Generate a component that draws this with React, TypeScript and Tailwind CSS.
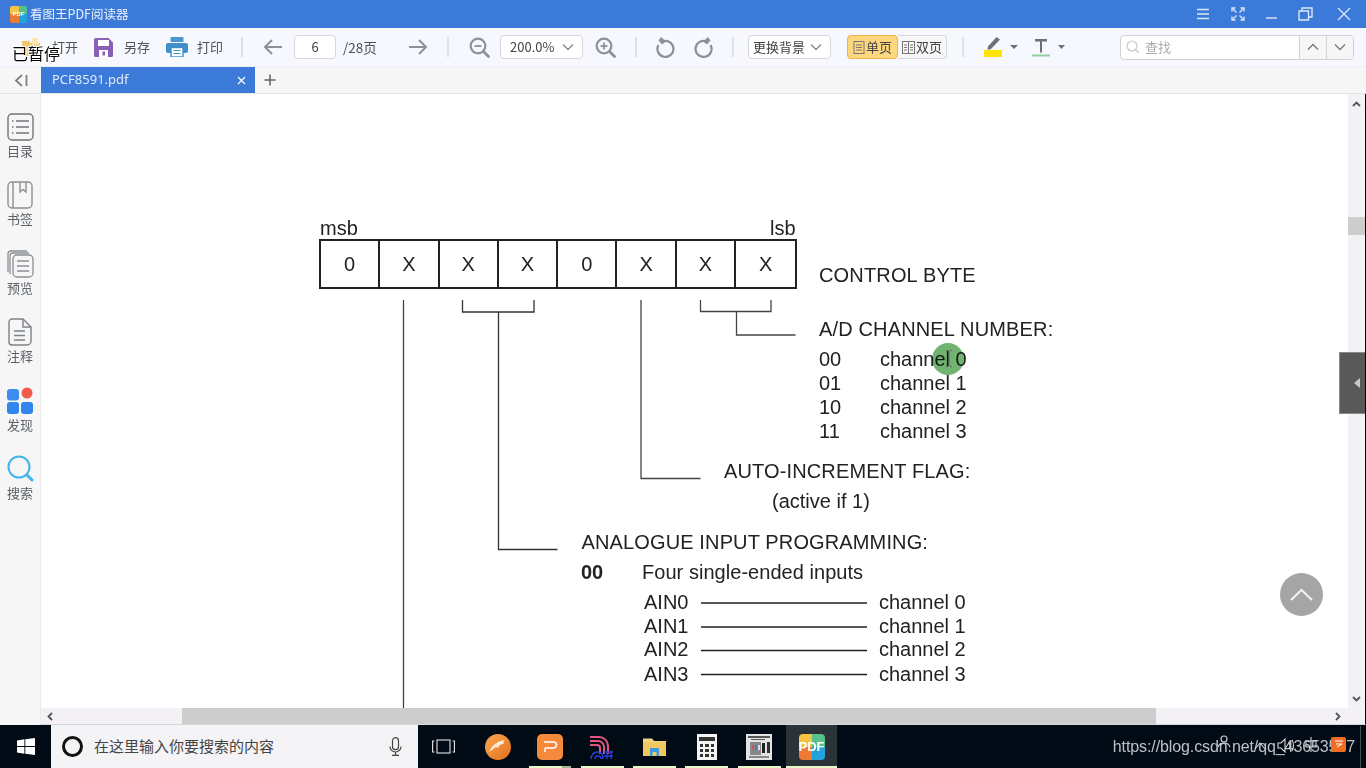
import React from "react";

const CJK = "font-['Noto_Sans_CJK_SC','Noto_Sans',sans-serif]";

function T({ c, children }: { c: string; children: React.ReactNode }) {
  return <div className={`absolute whitespace-nowrap text-[20px] leading-[24px] text-[#222] ${c}`}>{children}</div>;
}

function PdfLogo({ box, text }: { box: string; text: string }) {
  return (
    <div className={`relative shrink-0 overflow-hidden grid grid-cols-2 grid-rows-2 ${box}`}>
      <div className="bg-[#f6c343]" />
      <div className="bg-[#58c08a]" />
      <div className="bg-[#ee7a35]" />
      <div className="bg-[#22a3dc]" />
      <div className={`absolute inset-0 flex items-center justify-center font-bold text-white font-['Liberation_Sans',sans-serif] ${text}`}>PDF</div>
    </div>
  );
}

function Sep({ ml }: { ml: string }) {
  return <div className={`w-[2px] h-[20px] bg-[#dfe1e6] shrink-0 ${ml}`} />;
}

function Chevron({ up = false, c = "#888" }: { up?: boolean; c?: string }) {
  return (
    <svg width="12" height="8" viewBox="0 0 12 8" fill="none">
      <path d={up ? "M1 6.5 6 1.5 11 6.5" : "M1 1.5 6 6.5 11 1.5"} stroke={c} strokeWidth="1.3" />
    </svg>
  );
}

function Zoom({ plus }: { plus?: boolean }) {
  return (
    <svg width="21" height="21" viewBox="0 0 21 21" fill="none" stroke="#8a9299">
      <circle cx="9" cy="9" r="7.3" strokeWidth="2.2" />
      <path d="M14.5 14.5 19.5 19.5" strokeWidth="2.8" strokeLinecap="round" />
      <path d="M5.5 9h7" strokeWidth="1.8" />
      {plus && <path d="M9 5.5v7" strokeWidth="1.8" />}
    </svg>
  );
}

function Rotate({ flip }: { flip?: boolean }) {
  return (
    <svg width="20" height="22" viewBox="0 0 20 22" fill="none" stroke="#8a9299" strokeWidth="2.2" className={flip ? "-scale-x-100" : ""}>
      <path d="M6.5 5.5A8 8 0 1 1 2.5 9" />
      <path d="M6 0.8 10.5 4.8 7 7.5 4 4Z" fill="#8a9299" strokeWidth="0.8" transform="translate(-1 0.6)" />
    </svg>
  );
}

function SideItem({ label, children }: { label: string; children: React.ReactNode }) {
  return (
    <div className="h-[68.4px] flex flex-col items-center shrink-0">
      <div className="h-[33px] pt-[2px] w-full flex items-start justify-center">{children}</div>
      <div className={`text-[13px] leading-[14px] text-[#5c6168] ${CJK}`}>{label}</div>
    </div>
  );
}

const cells = ["0", "X", "X", "X", "0", "X", "X", "X"];

export default function App() {
  return (
    <div className={`relative w-[1366px] h-[768px] overflow-hidden flex flex-col bg-white ${CJK}`}>
      {/* Title bar */}
      <div className="h-[28px] shrink-0 bg-[#3b7ad9] flex items-center text-white">
        <PdfLogo box="ml-[10px] w-[17px] h-[17px] rounded-[2px]" text="text-[6px]" />
        <div className="ml-[3px] text-[12.5px] leading-[16px] text-[#e9f0fb]">看图王PDF阅读器</div>
        <div className="flex-1" />
        <svg width="160" height="20" viewBox="0 0 160 20" fill="none" stroke="#dbe7f8" className="mr-[14px]">
          <path d="M5 5.500h12M5 10h12M5 14.500h12" strokeWidth="1.4" />
          <path d="M41 5l3.500 3.500M51 5l-3.500 3.500M41 15l3.500-3.500M51 15l-3.500-3.500" strokeWidth="1.4" />
          <path d="M40 7.500V4h3.500M48.500 4H52v3.500M40 12.500V16h3.500M48.500 16H52v-3.500" strokeWidth="1.4" />
          <path d="M74 14h11" strokeWidth="1.4" />
          <path d="M107 7h9.500v9H107zM110 7V4h10v9h-3.500" strokeWidth="1.4" />
          <path d="M146 4l12 12M158 4l-12 12" strokeWidth="1.4" />
        </svg>
      </div>

      {/* Toolbar */}
      <div className="h-[39px] shrink-0 bg-[#f7f8fd] border-b border-[#eceef3] flex items-center text-[13px] text-[#4d5358]">
        <svg width="20" height="19" viewBox="0 0 20 19" className="ml-[21px] shrink-0">
          <path d="M1 3h7l2 2h9v13H1Z" fill="#f3c873" />
          <path d="M11 0h6v7h-6z" fill="#fbe6b0" />
        </svg>
        <div className="ml-[11px] w-[26px] shrink-0">打开</div>
        <svg width="19" height="19" viewBox="0 0 19 19" className="ml-[16px] shrink-0">
          <path d="M1.5 0h13L19 4.500v13a1.500 1.500 0 0 1-1.500 1.500h-16A1.500 1.500 0 0 1 0 17.500v-16A1.500 1.500 0 0 1 1.500 0Z" fill="#8a5fb4" />
          <rect x="4" y="2" width="11" height="6" fill="#fff" />
          <rect x="5" y="12" width="9" height="7" fill="#fff" />
          <rect x="8.500" y="13.500" width="2.500" height="4" fill="#8a5fb4" />
        </svg>
        <div className="ml-[11px] w-[27px] shrink-0">另存</div>
        <svg width="22" height="20" viewBox="0 0 22 20" className="ml-[15px] shrink-0">
          <rect x="4.500" y="0" width="13" height="5" fill="#4a96cf" rx="1" />
          <rect x="0" y="6" width="22" height="10" rx="2" fill="#3f8fca" />
          <rect x="5" y="10.500" width="12" height="9.500" fill="#fff" stroke="#3f8fca" strokeWidth="1.4" />
          <path d="M7.500 13.500h7M7.500 16.500h7" stroke="#3f8fca" />
        </svg>
        <div className="ml-[9px] w-[26px] shrink-0">打印</div>
        <Sep ml="ml-[18px]" />
        <svg width="20" height="18" viewBox="0 0 20 18" fill="none" stroke="#8a9299" strokeWidth="2" className="ml-[20px] shrink-0">
          <path d="M19 9H2M9 2 2 9l7 7" />
        </svg>
        <div className="ml-[11px] w-[42px] h-[24px] shrink-0 bg-white border border-[#d5d8de] rounded-[4px] flex items-center justify-center text-[#444]">6</div>
        <div className="ml-[7px] w-[34px] shrink-0 text-[13.5px] whitespace-nowrap">/28页</div>
        <svg width="20" height="18" viewBox="0 0 20 18" fill="none" stroke="#8a9299" strokeWidth="2" className="ml-[31px] shrink-0">
          <path d="M1 9h17M11 2l7 7-7 7" />
        </svg>
        <Sep ml="ml-[19px]" />
        <div className="ml-[20px] shrink-0 flex"><Zoom /></div>
        <div className="ml-[10px] w-[83px] h-[24px] shrink-0 bg-white border border-[#d5d8de] rounded-[4px] flex items-center justify-between pl-[9px] pr-[8px] text-[#444]">
          <span>200.0%</span>
          <Chevron />
        </div>
        <div className="ml-[12px] shrink-0 flex"><Zoom plus /></div>
        <Sep ml="ml-[19px]" />
        <div className="ml-[19px] shrink-0 flex"><Rotate /></div>
        <div className="ml-[17px] shrink-0 flex"><Rotate flip /></div>
        <Sep ml="ml-[19px]" />
        <div className="ml-[14px] w-[83px] h-[24px] shrink-0 bg-white border border-[#d5d8de] rounded-[4px] flex items-center justify-between pl-[4px] pr-[8px] text-[#444]">
          <span>更换背景</span>
          <Chevron />
        </div>
        <div className="ml-[16px] w-[51px] h-[24px] shrink-0 bg-[#fdd77d] border border-[#eeb24e] rounded-[4px] flex items-center justify-center gap-[1px] text-[#444]">
          <svg width="12" height="13" viewBox="0 0 12 13" fill="none" stroke="#777"><rect x="1" y="0.500" width="10" height="12" /><path d="M3 4h6M3 6.500h6M3 9h6" /></svg>
          <span>单页</span>
        </div>
        <div className="w-[49px] h-[24px] shrink-0 bg-[#f7f7f7] border border-l-0 border-[#d5d8de] rounded-r-[4px] flex items-center justify-center gap-[1px] text-[#444]">
          <svg width="13" height="13" viewBox="0 0 13 13" fill="none" stroke="#777"><rect x="0.500" y="0.500" width="12" height="12" /><path d="M6.500 0.500v12M2 4h3M2 6.500h3M2 9h3M8 4h3M8 6.500h3M8 9h3" /></svg>
          <span>双页</span>
        </div>
        <Sep ml="ml-[15px]" />
        <svg width="18" height="20" viewBox="0 0 18 20" className="ml-[20px] shrink-0">
          <path d="M12.500 0 16 2.500 7 12 3.500 13 4 9.500Z" fill="#6b7177" />
          <rect x="0" y="13" width="18" height="7" fill="#ffe400" />
        </svg>
        <svg width="8" height="4" viewBox="0 0 8 4" className="ml-[8px] shrink-0"><path d="M0 0h8L4 4Z" fill="#6b7177" /></svg>
        <svg width="18" height="19" viewBox="0 0 18 19" className="ml-[14px] shrink-0">
          <path d="M3 1h12v2.500H10v11H8v-11H3Z" fill="#6b7177" />
          <rect x="0" y="16.500" width="18" height="2" fill="#8fd19e" />
        </svg>
        <svg width="7" height="4" viewBox="0 0 7 4" className="ml-[8px] shrink-0"><path d="M0 0h7L3.500 4Z" fill="#6b7177" /></svg>
        <div className="ml-[55px] w-[234px] h-[25px] shrink-0 bg-white border border-[#d0d2d6] rounded-[4px] flex items-center overflow-hidden">
          <svg width="14" height="14" viewBox="0 0 14 14" fill="none" stroke="#c4c7cb" className="ml-[5px] shrink-0">
            <circle cx="6" cy="6" r="5" strokeWidth="1.2" /><path d="M9.500 9.500 13 13" strokeWidth="1.3" />
          </svg>
          <span className="ml-[5px] flex-1 text-[#a9adb2]">查找</span>
          <div className="w-[27px] h-full bg-[#f6f6f6] border-l border-[#d0d2d6] flex items-center justify-center"><Chevron up c="#777" /></div>
          <div className="w-[27px] h-full bg-[#f6f6f6] border-l border-[#d0d2d6] flex items-center justify-center"><Chevron c="#777" /></div>
        </div>
      </div>

      {/* Tabs */}
      <div className="h-[27px] shrink-0 bg-[#f6f6f6] border-b border-[#e2e2e2] flex items-stretch">
        <div className="w-[41px] shrink-0 flex items-center justify-center">
          <svg width="14" height="13" viewBox="0 0 14 13" fill="none" stroke="#7c8287" strokeWidth="1.8">
            <path d="M8 1 2 6.500 8 12M12.500 1v11" />
          </svg>
        </div>
        <div className="w-[214px] shrink-0 bg-[#3b7ad9] flex items-center justify-between pl-[11px] pr-[9px] text-[13px] text-[#dfe9f9] font-['Noto_Sans',sans-serif]">
          <span>PCF8591.pdf</span>
          <svg width="9" height="9" viewBox="0 0 9 9" stroke="#fff" strokeWidth="1.2"><path d="M1 1l7 7M8 1 1 8" /></svg>
        </div>
        <div className="ml-[9px] flex items-center">
          <svg width="12" height="12" viewBox="0 0 12 12" stroke="#666" strokeWidth="1.6"><path d="M6 0.500v11M0.500 6h11" /></svg>
        </div>
      </div>

      {/* Body */}
      <div className="flex-1 min-h-0 flex">
        <div className="w-[41px] shrink-0 bg-[#f6f6f6] border-r border-[#ececec] pt-[17px] flex flex-col">
          <SideItem label="目录">
            <svg width="27" height="28" viewBox="0 0 27 28" fill="none" stroke="#70767c" strokeWidth="1.4">
              <rect x="1" y="1" width="25" height="26" rx="4" />
              <path d="M9 8h13M9 14h13M9 20h13M5 8h1.500M5 14h1.500M5 20h1.500" strokeWidth="1.6" />
            </svg>
          </SideItem>
          <SideItem label="书签">
            <svg width="26" height="28" viewBox="0 0 26 28" fill="none" stroke="#8a9095" strokeWidth="1.4">
              <rect x="1" y="1" width="24" height="26" rx="4" />
              <path d="M6 1v26M13 1v10l3-2.500 3 2.500V1" />
            </svg>
          </SideItem>
          <SideItem label="预览">
            <svg width="27" height="28" viewBox="0 0 27 28" fill="none" stroke="#8a9095" strokeWidth="1.3">
              <path d="M1 22V4a3 3 0 0 1 3-3h16" />
              <path d="M3 24V6a3 3 0 0 1 3-3h16" />
              <rect x="6" y="5" width="20" height="22" rx="4" />
              <path d="M10 11h12M10 16h12M10 21h12" strokeWidth="1.6" />
            </svg>
          </SideItem>
          <SideItem label="注释">
            <svg width="24" height="28" viewBox="0 0 24 28" fill="none" stroke="#7c8288" strokeWidth="1.4">
              <path d="M4 1h11l8 8v14a4 4 0 0 1-4 4H4a3 3 0 0 1-3-3V4a3 3 0 0 1 3-3Z" />
              <path d="M15 1v8h8M6 13h11M6 17.500h11M6 22h11" />
            </svg>
          </SideItem>
          <SideItem label="发现">
            <svg width="26" height="27" viewBox="0 0 26 27">
              <rect x="0" y="2" width="12" height="11.500" rx="3" fill="#3d8cf0" />
              <circle cx="20" cy="6" r="5.500" fill="#f25a4a" />
              <rect x="0" y="15" width="12" height="12" rx="3" fill="#2e86ee" />
              <rect x="14" y="15" width="12" height="12" rx="3" fill="#2e86ee" />
            </svg>
          </SideItem>
          <SideItem label="搜索">
            <svg width="27" height="27" viewBox="0 0 27 27" fill="none" stroke="#43b4ea">
              <circle cx="12" cy="12" r="10.500" strokeWidth="2" />
              <path d="M20 20l5 5" strokeWidth="3" strokeLinecap="round" />
            </svg>
          </SideItem>
        </div>

        <div className="flex-1 min-w-0 flex flex-col">
          <div className="flex-1 min-h-0 flex">
            {/* PDF canvas */}
            <div className="relative flex-1 bg-white overflow-hidden font-['Liberation_Sans',Arial,sans-serif]">
              <svg className="absolute left-0 top-0" width="1307" height="615" viewBox="41 94 1307 615" fill="none" stroke="#444" strokeWidth="1.3">
                <path d="M403.500 300V708" />
                <path d="M462.500 300V312H534V300M498.500 312V549.500H557.500" stroke="#333" />
                <path d="M641 300V478.500H700.500" />
                <path d="M700.500 300V311.500H771V300M736.500 311.500V335H795.500" />
                <path d="M701 603H867M701 627H867M701 650.500H867M701 674.500H867" stroke="#222" />
              </svg>

              <T c="left-[279px] top-[122px]">msb</T>
              <T c="left-[729px] top-[122px]">lsb</T>
              <div className="absolute left-[278px] top-[145px] w-[478.300px] h-[50px] border-2 border-[#222] grid grid-cols-8 text-[20px] text-[#222]">
                {cells.map((v, i) => (
                  <div key={i} className={`flex items-center justify-center ${i < 7 ? "border-r-2 border-[#222]" : ""}`}>{v}</div>
                ))}
              </div>
              <T c="left-[778px] top-[169px] tracking-[0.16px]">CONTROL BYTE</T>
              <T c="left-[778px] top-[223px] tracking-[0.15px]">A/D CHANNEL NUMBER:</T>
              <T c="left-[778px] top-[253px]">00</T>
              <T c="left-[839px] top-[253px]">channel 0</T>
              <T c="left-[778px] top-[277px]">01</T>
              <T c="left-[839px] top-[277px]">channel 1</T>
              <T c="left-[778px] top-[301px]">10</T>
              <T c="left-[839px] top-[301px]">channel 2</T>
              <T c="left-[778px] top-[325px]">11</T>
              <T c="left-[839px] top-[325px]">channel 3</T>
              <T c="left-[683px] top-[365px] tracking-[0.13px]">AUTO-INCREMENT FLAG:</T>
              <T c="left-[731px] top-[395px]">(active if 1)</T>
              <T c="left-[540.500px] top-[436px] tracking-[0.13px]">ANALOGUE INPUT PROGRAMMING:</T>
              <T c="left-[540px] top-[466px] font-bold">00</T>
              <T c="left-[601px] top-[466px] tracking-[0.04px]">Four single-ended inputs</T>
              <T c="left-[603px] top-[496px]">AIN0</T>
              <T c="left-[838px] top-[496px]">channel 0</T>
              <T c="left-[603px] top-[520px]">AIN1</T>
              <T c="left-[838px] top-[520px]">channel 1</T>
              <T c="left-[603px] top-[543px]">AIN2</T>
              <T c="left-[838px] top-[543px]">channel 2</T>
              <T c="left-[603px] top-[568px]">AIN3</T>
              <T c="left-[838px] top-[568px]">channel 3</T>

              {/* click highlight and cursor */}
              <div className="absolute left-[891px] top-[249px] w-[32px] h-[32px] rounded-full bg-[#72b372] mix-blend-multiply" />
              <svg className="absolute left-[904px] top-[256px]" width="8" height="17" viewBox="0 0 8 17" fill="none" stroke="#666" strokeWidth="1">
                <path d="M1 0.500h2l1 1 1-1h2M4 1.500v14M1 16.500h2l1-1 1 1h2" />
              </svg>

              {/* scroll-to-top button */}
              <div className="absolute left-[1239px] top-[479px] w-[43px] h-[43px] rounded-full bg-[#a5a5a5] flex items-center justify-center">
                <svg width="23" height="13" viewBox="0 0 23 13" fill="none" stroke="#f2f2f2" strokeWidth="2"><path d="M1 12 11.500 2 22 12" /></svg>
              </div>

              {/* side drawer handle */}
              <div className="absolute right-0 top-[258px] w-[9px] h-[62px] bg-[#595959] border-l border-t border-b border-[#8a8a8a]" />
            </div>

            {/* Vertical scrollbar */}
            <div className="relative w-[18px] shrink-0 bg-[#f3f1f5] border-r border-r-black flex flex-col items-center">
              <svg width="9" height="6" viewBox="0 0 9 6" fill="none" stroke="#555" strokeWidth="1.8" className="mt-[7px] shrink-0"><path d="M1 5 4.500 1.500 8 5" /></svg>
              <div className="w-full h-[18px] bg-[#cdcdcd] mt-[110px] shrink-0" />
              <div className="flex-1" />
              <svg width="9" height="6" viewBox="0 0 9 6" fill="none" stroke="#555" strokeWidth="1.8" className="mb-[6px] shrink-0"><path d="M1 1 4.500 4.500 8 1" /></svg>
              <div className="absolute left-0 top-[258px] w-[17px] h-[62px] bg-[#595959] border-t border-b border-[#8a8a8a] flex items-center justify-center">
                <svg width="6" height="10" viewBox="0 0 6 10"><path d="M6 0v10L0 5Z" fill="#c8c8c8" /></svg>
              </div>
            </div>
          </div>

          {/* Horizontal scrollbar */}
          <div className="h-[17px] shrink-0 bg-[#f3f1f5] border-b border-[#d8d8d8] border-r border-r-black flex items-center">
            <svg width="6" height="9" viewBox="0 0 6 9" fill="none" stroke="#555" strokeWidth="1.8" className="ml-[6px] shrink-0"><path d="M5 1 1.500 4.500 5 8" /></svg>
            <div className="ml-[129px] w-[974px] h-full bg-[#cdcdcd] shrink-0" />
            <div className="flex-1" />
            <svg width="6" height="9" viewBox="0 0 6 9" fill="none" stroke="#555" strokeWidth="1.8" className="mr-[24px] shrink-0"><path d="M1 1 4.500 4.500 1 8" /></svg>
          </div>
        </div>
      </div>

      {/* Taskbar */}
      <div className="relative h-[43px] shrink-0 bg-[#010b16] flex items-center">
        <svg width="18" height="17" viewBox="0 0 18 17" className="ml-[17px] shrink-0" fill="#fff">
          <path d="M0 2.400 7.400 1.300V8H0ZM8.300 1.200 18 0V8H8.300ZM0 9h7.400v6.700L0 14.600ZM8.300 9H18v8l-9.700-1.300Z" />
        </svg>
        <div className="ml-[16px] w-[367px] h-full shrink-0 bg-[#f4f3f6] flex items-center">
          <div className="ml-[11px] w-[21px] h-[21px] rounded-full border-[3px] border-[#111] shrink-0" />
          <div className="ml-[11px] flex-1 text-[15px] text-[#444]">在这里输入你要搜索的内容</div>
          <svg width="13" height="19" viewBox="0 0 13 19" fill="none" stroke="#444" strokeWidth="1.2" className="mr-[16px] shrink-0">
            <rect x="3.500" y="0.700" width="6" height="12" rx="3" />
            <path d="M1 9.500a5.500 5.500 0 0 0 11 0M6.500 15v3M3 18.300h7" />
          </svg>
        </div>
        <svg width="23" height="15" viewBox="0 0 23 15" fill="none" stroke="#e8e8e8" strokeWidth="1.1" className="ml-[14px] shrink-0">
          <rect x="5" y="1" width="13" height="13" />
          <path d="M2.500 2H0.600v11h1.900M20.500 2h1.900v11h-1.900" />
        </svg>
        <div className="ml-[30px] w-[26px] h-[26px] rounded-full bg-gradient-to-br from-[#f8a951] to-[#e46d12] shrink-0 flex items-center justify-center">
          <svg width="20" height="18" viewBox="0 0 20 18" fill="#fbe8d4"><path d="M1 14C4 7 9 3 17 2c-2 2-2 3-1 4-4 0-5 2-6 4l-2-1c-2 1-4 3-7 5Z" /></svg>
        </div>
        <div className="ml-[26px] w-[26px] h-[26px] rounded-[5px] bg-[#f58a3c] shrink-0 flex items-center justify-center">
          <svg width="15" height="12" viewBox="0 0 15 12" fill="none" stroke="#fff" strokeWidth="1.500"><path d="M1 1h9.500a3 3 0 0 1 0 6H2M2 7v4" /></svg>
        </div>
        <svg width="23" height="26" viewBox="0 0 23 26" fill="none" className="ml-[27px] shrink-0">
          <path d="M0 3h9a9 9 0 0 1 9 9v8M0 7h8a6 6 0 0 1 6 6v7M0 11h7a3 3 0 0 1 3 3v6" stroke="#e2557f" strokeWidth="2" />
          <path d="M1 25c0-5 4-7 7-7s5 2 5 7M5 25c0-2 1-3 3-3s3 1 3 3M14 18h9M14 22h9M17 17v8M21 17v8" stroke="#2a3fd8" strokeWidth="1.3" />
        </svg>
        <svg width="23" height="20" viewBox="0 0 23 20" className="ml-[30px] shrink-0">
          <path d="M0 1.500h9l2 2.500h12v15H0Z" fill="#f3d67b" />
          <rect x="0" y="5" width="23" height="14" fill="#f1c763" />
          <path d="M7 11h9v8h-2.500v-4h-4v4H7Z" fill="#3c9bd8" />
        </svg>
        <div className="ml-[31px] w-[20px] h-[26px] bg-[#f4f4f4] shrink-0 flex flex-col items-center pt-[3px]">
          <div className="w-[16px] h-[4px] bg-[#333]" />
          <div className="mt-[3px] w-[14px] grid grid-cols-3 gap-x-[2px] gap-y-[2px]">
            {[0, 1, 2, 3, 4, 5, 6, 7, 8].map((k) => <div key={k} className="h-[3px] bg-[#333]" />)}
          </div>
        </div>
        <svg width="26" height="26" viewBox="0 0 26 26" className="ml-[29px] shrink-0">
          <rect width="26" height="26" fill="#e3e3e3" />
          <path d="M2 2h22v2H2zM5 5h14v1H5z" fill="#555" />
          <rect x="4" y="8" width="11" height="13" fill="#86888b" />
          <rect x="16" y="9" width="3" height="10" fill="#222" />
          <rect x="21" y="8" width="3" height="11" fill="#333" />
          <rect x="6" y="11" width="2" height="5" fill="#c55" />
          <rect x="9" y="11" width="2" height="5" fill="#57a" />
          <rect x="12" y="11" width="2" height="5" fill="#ddd" />
          <rect x="3" y="22" width="20" height="2" fill="#888" />
        </svg>
        <div className="ml-[14px] w-[51px] h-full bg-[#2b3238] shrink-0 flex items-center justify-center">
          <PdfLogo box="w-[26px] h-[26px] rounded-[4px]" text="text-[13px]" />
        </div>

        <div className="flex-1" />
        <div className="mr-[11px] whitespace-nowrap text-[16px] tracking-[-0.1px] leading-[20px] text-[#bcc0c4] font-['Liberation_Sans',sans-serif]">https://blog.csdn.net/qq_43653537</div>
        <div className="absolute left-[1360px] top-[1px] bottom-0 w-[1px] bg-[#4a4f54]" />
        <div className="absolute left-[1365px] top-0 bottom-0 w-[1px] bg-black" />

        {/* system tray overlapped by the watermark */}
        <svg width="140" height="24" viewBox="0 0 140 24" fill="none" stroke="#d6d6d6" strokeWidth="1.1" className="absolute left-[1210px] top-[9px]">
          <circle cx="14" cy="5" r="3" />
          <path d="M8 13c1-3 3-4 6-4s5 1 6 4" />
          <path d="M45 15l5-6 5 6" />
          <path d="M68 9h3l4-4v13l-4-4h-3ZM79 8c1 2 1 5 0 7M82 6c2 3 2 8 0 11" />
          <path d="M96 7h10v6H96ZM101 3v15" />
        </svg>
        <div className="absolute left-[1331px] top-[12px] w-[15px] h-[15px] rounded-[2px] bg-[#ee6d25] flex items-center justify-center">
          <svg width="10" height="9" viewBox="0 0 10 9" fill="none" stroke="#fff"><path d="M1 1h8M2 4h6M3 7l5-3" /></svg>
        </div>

        {/* taskbar running-app markers */}
        <div className="absolute left-[529px] bottom-0 w-[33px] h-[2px] bg-[#e8f8c8]" />
        <div className="absolute left-[562px] bottom-0 w-[9px] h-[2px] bg-[#a7b490]" />
        <div className="absolute left-[581px] bottom-0 w-[43px] h-[2px] bg-[#e8f8c8]" />
        <div className="absolute left-[633px] bottom-0 w-[43px] h-[2px] bg-[#e8f8c8]" />
        <div className="absolute left-[685px] bottom-0 w-[43px] h-[2px] bg-[#e8f8c8]" />
        <div className="absolute left-[738px] bottom-0 w-[43px] h-[2px] bg-[#e8f8c8]" />
        <div className="absolute left-[786px] bottom-0 w-[51px] h-[2px] bg-[#e8f8c8]" />
      </div>

      {/* paused overlay label */}
      <div className="absolute left-[12px] top-[43px] text-[16px] leading-[20px] text-black [text-shadow:1px_0_0_#fff,-1px_0_0_#fff,0_1px_0_#fff,0_-1px_0_#fff,1px_1px_0_#fff,-1px_-1px_0_#fff,1px_-1px_0_#fff,-1px_1px_0_#fff]">
        已暂停
      </div>
    </div>
  );
}
